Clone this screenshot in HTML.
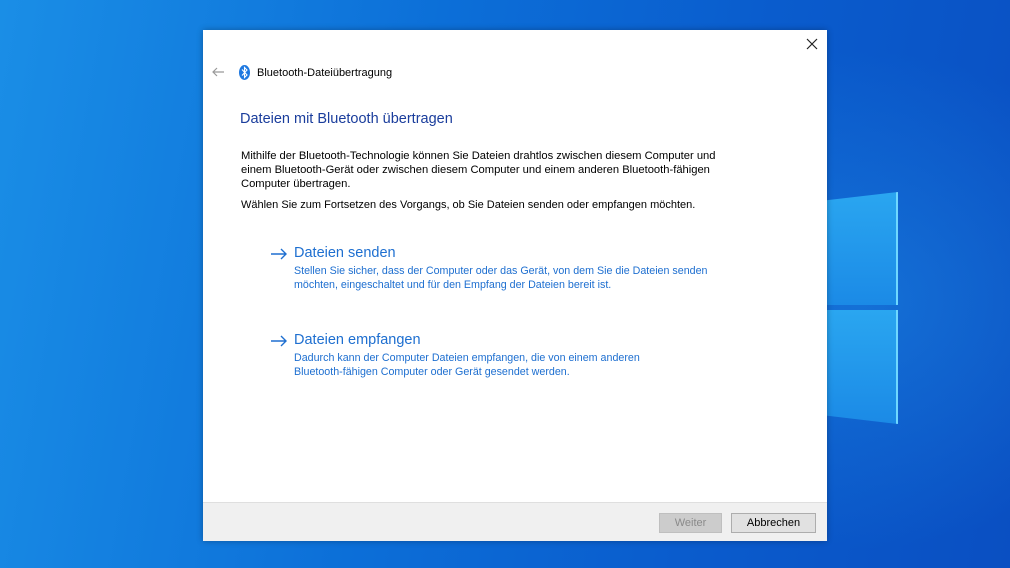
<!DOCTYPE html>
<html><head><meta charset="utf-8"><style>
*{margin:0;padding:0;box-sizing:border-box}
body{width:1010px;height:568px;overflow:hidden;position:relative;font-family:"Liberation Sans",sans-serif;
background:linear-gradient(100deg,#1a8ee6 0%,#0c6fd8 40%,#0a5ccd 70%,#0a4fc2 100%);}
.glow{position:absolute;left:0;top:0;width:1010px;height:568px;background:radial-gradient(ellipse 300px 250px at 860px 300px,rgba(40,160,240,.35),rgba(0,0,0,0));}
.pane{position:absolute;background:linear-gradient(180deg,#2aa6f0,#1b8ae6);border-right:2px solid #6fd8ff;}
.dlg{position:absolute;left:203px;top:30px;width:624px;height:511px;background:#fff;box-shadow:0 0 6px rgba(0,0,0,.3)}
.t{position:absolute;white-space:nowrap;font-size:11px;color:#000}
.b{color:#1e6fd0}
.foot{position:absolute;left:0;top:472px;width:624px;height:39px;background:#f0f0f0;border-top:1px solid #dfdfdf}
.btn{position:absolute;top:10px;height:20px;font-size:11px;text-align:center;line-height:18px;border:1px solid #adadad;background:#e1e1e1}
</style></head><body>
<div class="glow"></div>
<div class="pane" style="left:820px;top:192px;width:78px;height:113px;clip-path:polygon(0 8%,100% 0,100% 100%,0 100%)"></div>
<div class="pane" style="left:820px;top:310px;width:78px;height:114px;clip-path:polygon(0 0,100% 0,100% 100%,0 92%)"></div>
<div class="dlg">
<svg style="position:absolute;left:603px;top:8px" width="12" height="12"><path d="M1 1L11 11M11 1L1 11" stroke="#222" stroke-width="1.2"/></svg>
<svg style="position:absolute;left:8px;top:37px" width="14" height="10"><path d="M13 5H2M6 1L2 5L6 9" stroke="#999" stroke-width="1.2" fill="none"/></svg>
<svg style="position:absolute;left:36px;top:35px" width="11" height="15"><ellipse cx="5.5" cy="7.5" rx="5.5" ry="7.5" fill="#1e78e0"/><path d="M3 4.5L8 10L5.5 12.5V2.5L8 5L3 10.5" stroke="#fff" stroke-width="1.1" fill="none"/></svg>
<div class="t" style="left:54px;top:37px">Bluetooth-Dateiübertragung</div>
<div class="t" style="left:37px;top:81px;font-size:14.5px;color:#1a3d9c">Dateien mit Bluetooth übertragen</div>
<div class="t" style="left:38px;top:119px;line-height:14px;font-size:11.2px">Mithilfe der Bluetooth-Technologie können Sie Dateien drahtlos zwischen diesem Computer und<br>einem Bluetooth-Gerät oder zwischen diesem Computer und einem anderen Bluetooth-fähigen<br>Computer übertragen.</div>
<div class="t" style="left:38px;top:169px;font-size:11px">Wählen Sie zum Fortsetzen des Vorgangs, ob Sie Dateien senden oder empfangen möchten.</div>
<svg style="position:absolute;left:67px;top:218px" width="18" height="12"><path d="M1 6H16M11 1L16 6L11 11" stroke="#1e6fd0" stroke-width="1.4" fill="none"/></svg>
<div class="t b" style="left:91px;top:215px;font-size:14.5px">Dateien senden</div>
<div class="t b" style="left:91px;top:234px;line-height:14px;font-size:10.7px">Stellen Sie sicher, dass der Computer oder das Gerät, von dem Sie die Dateien senden<br>möchten, eingeschaltet und für den Empfang der Dateien bereit ist.</div>
<svg style="position:absolute;left:67px;top:305px" width="18" height="12"><path d="M1 6H16M11 1L16 6L11 11" stroke="#1e6fd0" stroke-width="1.4" fill="none"/></svg>
<div class="t b" style="left:91px;top:302px;font-size:14.5px">Dateien empfangen</div>
<div class="t b" style="left:91px;top:321px;line-height:14px;font-size:10.7px">Dadurch kann der Computer Dateien empfangen, die von einem anderen<br>Bluetooth-fähigen Computer oder Gerät gesendet werden.</div>
<div class="foot">
<div class="btn" style="left:456px;width:63px;color:#8a8a8a;background:#cccccc;border-color:#bfbfbf">Weiter</div>
<div class="btn" style="left:528px;width:85px">Abbrechen</div>
</div>
</div>
</body></html>
